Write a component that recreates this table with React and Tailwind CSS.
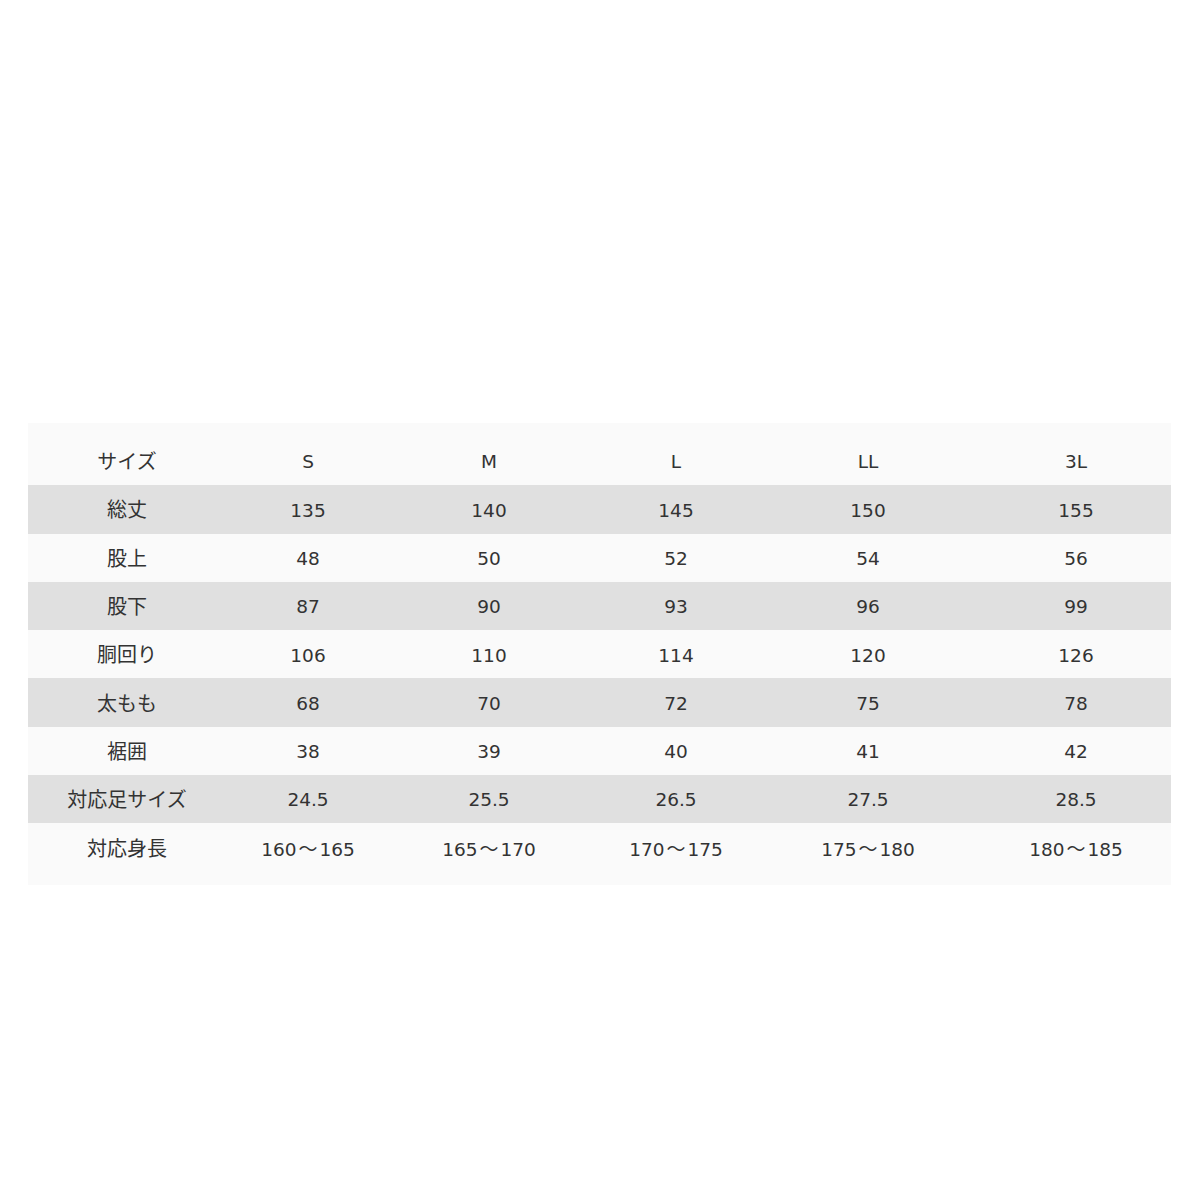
import React from "react";

const header = ["サイズ", "S", "M", "L", "LL", "3L"];
const rows = [
  ["総丈", "135", "140", "145", "150", "155"],
  ["股上", "48", "50", "52", "54", "56"],
  ["股下", "87", "90", "93", "96", "99"],
  ["胴回り", "106", "110", "114", "120", "126"],
  ["太もも", "68", "70", "72", "75", "78"],
  ["裾囲", "38", "39", "40", "41", "42"],
  ["対応足サイズ", "24.5", "25.5", "26.5", "27.5", "28.5"],
  ["対応身長", "160～165", "165～170", "170～175", "175～180", "180～185"],
];

function Value({ text }) {
  if (text.includes("～")) {
    const [a, b] = text.split("～");
    return (
      <span>
        {a}
        <span className="px-[2px] text-[19px]" style={{ fontFamily: '"Noto Sans CJK JP", sans-serif' }}>～</span>
        {b}
      </span>
    );
  }
  return <span>{text}</span>;
}

function Row({ cells, gray }) {
  return (
    <div
      className={`grid grid-cols-[198px_164px_198px_176px_208px_199px] h-[48.3px] items-center ${
        gray ? "bg-[#e0e0e0]" : ""
      }`}
    >
      {cells.map((c, i) =>
        i === 0 ? (
          <div
            key={i}
            className="text-center text-[20px]"
            style={{ fontFamily: '"Noto Sans CJK JP", "Noto Sans", sans-serif' }}
          >
            {c}
          </div>
        ) : (
          <div
            key={i}
            className={`text-center text-[18.5px] pt-[3px] ${i === 5 ? "pl-[9px]" : ""}`}
            style={{ fontFamily: '"DejaVu Sans", "Noto Sans CJK JP", sans-serif' }}
          >
            <Value text={c} />
          </div>
        )
      )}
    </div>
  );
}

export default function App() {
  return (
    <div className="w-[1200px] h-[1200px] bg-white pt-[423px] pl-[28px]">
      <div className="w-[1143px] bg-[#fafafa] pt-[14px] pb-[13px] text-[#333333] leading-none">
        <Row cells={header} />
        {rows.map((r, i) => (
          <Row key={i} cells={r} gray={i % 2 === 0} />
        ))}
      </div>
    </div>
  );
}
